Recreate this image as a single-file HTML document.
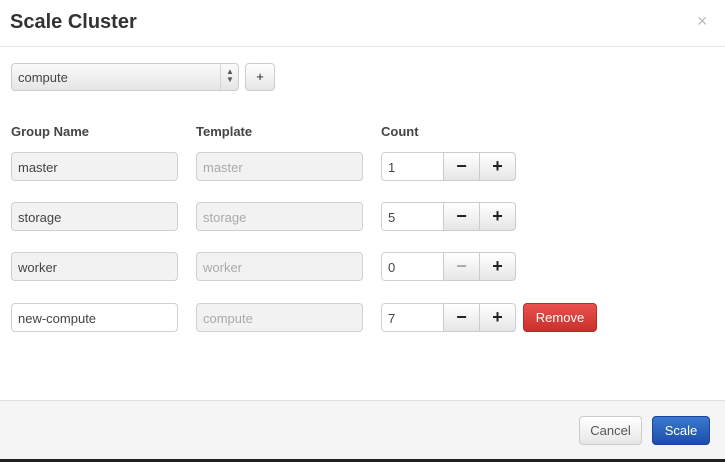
<!DOCTYPE html><html><head><style>
body{margin:0;width:725px;height:462px;background:#fff;font-family:"Liberation Sans",sans-serif;position:relative;overflow:hidden}
div,span{position:absolute;box-sizing:border-box}
.t{font-size:20px;font-weight:bold;color:#333;left:10px;top:11px}
.lbl{font-size:13px;font-weight:bold;color:#444;top:124px}
.in{height:29px;border:1px solid #d0d0d0;border-radius:4px;font-size:13px;padding:7px 0 0 6px;color:#444;background:#f2f2f2}
.dis{color:#aaa}
.w{background:#fff}
.bt{height:29px;border:1px solid #ccc;background:linear-gradient(#fff,#e6e6e6);text-align:center;font-size:18px;font-weight:bold;color:#222;line-height:26px}
</style></head><body>
<div class="t">Scale Cluster</div>
<div style="left:697px;top:11px;font-size:18px;color:#bbb">×</div>
<div style="left:0;top:46px;width:725px;height:1px;background:#e5e5e5"></div>
<div class="in" style="left:11px;top:63px;width:228px;height:28px;background:linear-gradient(#fafafa,#e6e6e6);border-color:#ccc;padding-top:6px">compute</div>
<div style="left:220px;top:64px;width:1px;height:26px;background:#d5d5d5"></div>
<div style="left:226px;top:68px;font-size:8px;color:#555;line-height:8px">▲<br>▼</div>
<div class="bt" style="left:245px;top:63px;width:30px;height:28px;border-radius:4px;font-size:13px;font-weight:normal">+</div>
<div class="lbl" style="left:11px">Group Name</div>
<div class="lbl" style="left:196px">Template</div>
<div class="lbl" style="left:381px">Count</div>

<div class="in" style="left:11px;top:152px;width:167px">master</div>
<div class="in dis" style="left:196px;top:152px;width:167px">master</div>
<div class="in w" style="left:381px;top:152px;width:63px;border-radius:4px 0 0 4px">1</div>
<div class="bt" style="left:443px;top:152px;width:37px">−</div>
<div class="bt" style="left:479px;top:152px;width:37px;border-radius:0 4px 4px 0">+</div>

<div class="in" style="left:11px;top:202px;width:167px">storage</div>
<div class="in dis" style="left:196px;top:202px;width:167px">storage</div>
<div class="in w" style="left:381px;top:202px;width:63px;border-radius:4px 0 0 4px">5</div>
<div class="bt" style="left:443px;top:202px;width:37px">−</div>
<div class="bt" style="left:479px;top:202px;width:37px;border-radius:0 4px 4px 0">+</div>

<div class="in" style="left:11px;top:252px;width:167px">worker</div>
<div class="in dis" style="left:196px;top:252px;width:167px">worker</div>
<div class="in w" style="left:381px;top:252px;width:63px;border-radius:4px 0 0 4px">0</div>
<div class="bt" style="left:443px;top:252px;width:37px;color:#aaa">−</div>
<div class="bt" style="left:479px;top:252px;width:37px;border-radius:0 4px 4px 0">+</div>

<div class="in w" style="left:11px;top:303px;width:167px">new-compute</div>
<div class="in dis" style="left:196px;top:303px;width:167px">compute</div>
<div class="in w" style="left:381px;top:303px;width:63px;border-radius:4px 0 0 4px">7</div>
<div class="bt" style="left:443px;top:303px;width:37px">−</div>
<div class="bt" style="left:479px;top:303px;width:37px;border-radius:0 4px 4px 0">+</div>
<div style="left:523px;top:303px;width:74px;height:29px;border-radius:4px;background:linear-gradient(#e8514d,#c9302c);border:1px solid #b52b27;color:#fff;font-size:13px;text-align:center;line-height:28px">Remove</div>

<div style="left:0;top:400px;width:725px;height:59px;background:#f5f5f5;border-top:1px solid #e0e0e0"></div>
<div style="left:0;top:459px;width:725px;height:3px;background:#222"></div>
<div class="bt" style="left:579px;top:416px;width:63px;border-radius:4px;font-size:13px;font-weight:normal;color:#555;line-height:28px">Cancel</div>
<div style="left:652px;top:416px;width:58px;height:29px;border-radius:4px;background:linear-gradient(#3a78d0,#1d4ea8);border:1px solid #1b43a0;color:#fff;font-size:13px;text-align:center;line-height:28px">Scale</div>
</body></html>
